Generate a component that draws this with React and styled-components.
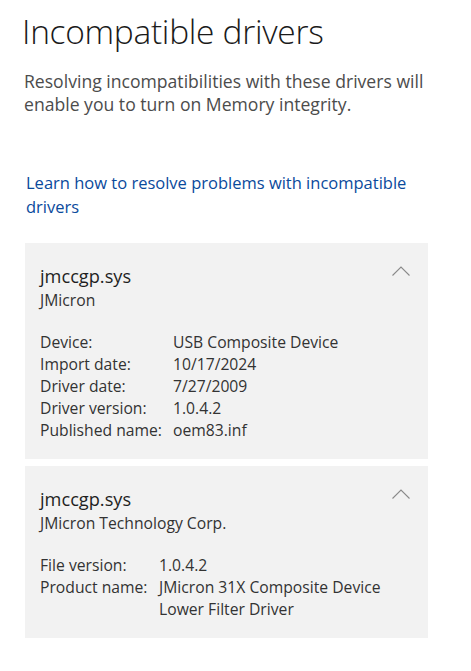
import React from 'react';
import styled, { createGlobalStyle } from 'styled-components';

const Global = createGlobalStyle`
body {
    margin: 0;
    background: #ffffff;
    font-family: 'Open Sans', 'Noto Sans', sans-serif;
}
`

const Page = styled.div`
width: 471px;
padding: 8px 43px 0 22px;
box-sizing: border-box;
`

const Title = styled.h1`
margin: 0;
font-weight: 300;
font-size: 33.5px;
line-height: 46px;
color: #1a1a1a;
letter-spacing: -0.3px;
`

const Intro = styled.p`
margin: 16px 0 0 2px;
font-size: 17.6px;
line-height: 23px;
color: #4c4c4c;
`

const Link = styled.a`
display: block;
margin: 55px 0 0 4px;
font-size: 16.5px;
line-height: 24px;
color: #0a4a9c;
text-decoration: none;
`

const Cards = styled.div`
display: flex;
flex-direction: column;
gap: 7px;
margin: 24px 0 0 3px;
`

const Card = styled.section`
background: #f2f2f2;
padding: 20px 18px 18px 15px;
`

const Head = styled.div`
display: flex;
justify-content: space-between;
align-items: flex-start;
`

const Name = styled.div`
font-size: 18.2px;
line-height: 26px;
color: #1f1f1f;
`

const Vendor = styled.div`
font-size: 15.7px;
line-height: 22px;
color: #333333;
`

const Chevron = styled.svg`
margin-top: 3px;
width: 18px;
height: 10px;
`

const Details = styled.div`
display: grid;
grid-template-columns: ${props => props.labelWidth}px 1fr;
margin-top: 20px;
font-size: 15.7px;
line-height: 22px;
color: #333333;
`

function DriverCard({name, vendor, labelWidth, rows}) {
    return (
        <Card>
            <Head>
                <div>
                    <Name>{name}</Name>
                    <Vendor>{vendor}</Vendor>
                </div>
                <Chevron viewBox="0 0 18 10">
                    <path d="M0.5 9.5 L9 1 L17.5 9.5" fill="none" stroke="#8a8a8a" strokeWidth="1.1"/>
                </Chevron>
            </Head>
            <Details labelWidth={labelWidth}>
                {rows.map(([k, v]) => (
                    <React.Fragment key={k}>
                        <span>{k}</span>
                        <span>{v}</span>
                    </React.Fragment>
                ))}
            </Details>
        </Card>
    )
}

export default function App() {
    return (
        <Page>
            <Global />
            <Title>Incompatible drivers</Title>
            <Intro>Resolving incompatibilities with these drivers will enable you to turn on Memory integrity.</Intro>
            <Link href="#">Learn how to resolve problems with incompatible drivers</Link>
            <Cards>
                <DriverCard
                    name="jmccgp.sys"
                    vendor="JMicron"
                    labelWidth={133}
                    rows={[
                        ['Device:', 'USB Composite Device'],
                        ['Import date:', '10/17/2024'],
                        ['Driver date:', '7/27/2009'],
                        ['Driver version:', '1.0.4.2'],
                        ['Published name:', 'oem83.inf'],
                    ]}
                />
                <DriverCard
                    name="jmccgp.sys"
                    vendor="JMicron Technology Corp."
                    labelWidth={119}
                    rows={[
                        ['File version:', '1.0.4.2'],
                        ['Product name:', 'JMicron 31X Composite Device Lower Filter Driver'],
                    ]}
                />
            </Cards>
        </Page>
    )
}
